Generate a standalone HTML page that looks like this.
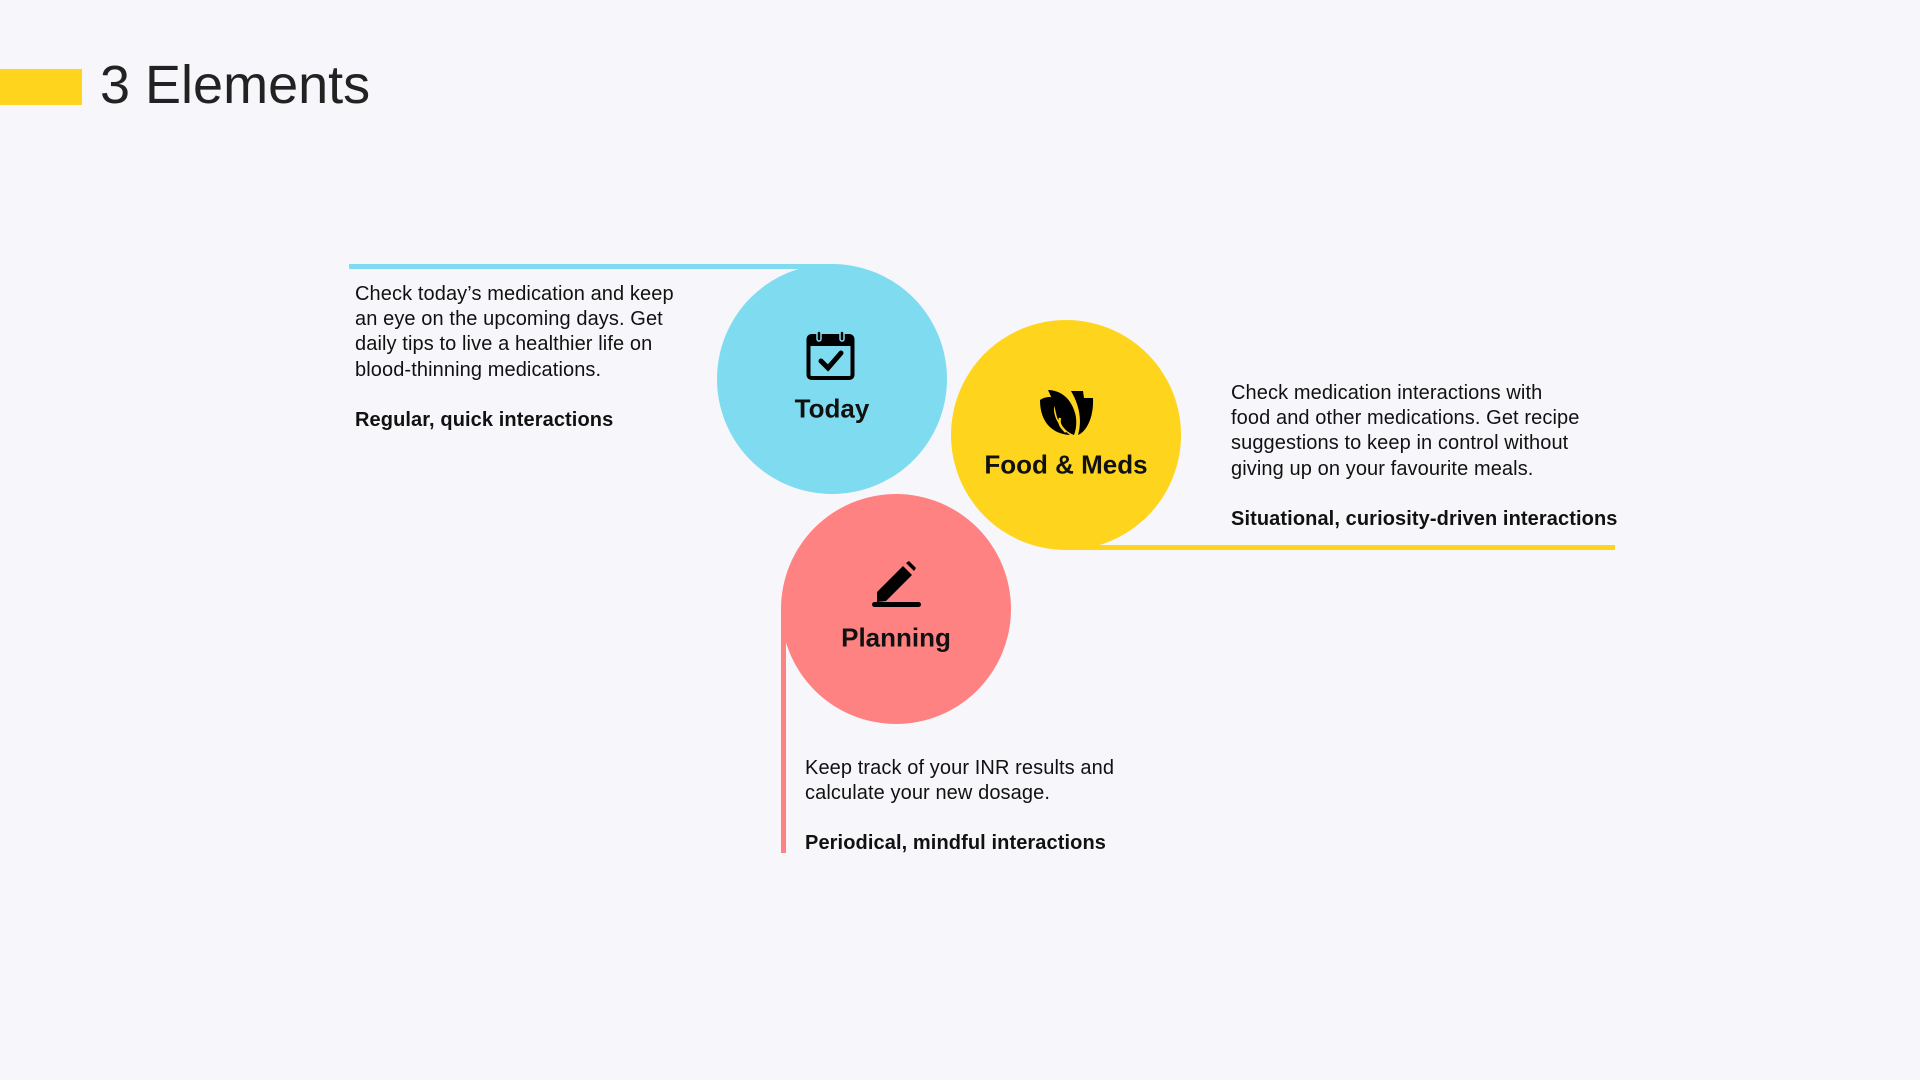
<!DOCTYPE html>
<html><head><meta charset="utf-8"><style>
body{margin:0;width:1920px;height:1080px;background:#f7f6fa;position:relative;overflow:hidden;font-family:"Liberation Sans",sans-serif;color:#111}
.a{position:absolute}
.c{position:absolute;border-radius:50%;width:230px;height:230px}
.lbl{position:absolute;width:300px;text-align:center;font-size:26px;font-weight:bold;transform:translate(-50%,-50%)}
.t{position:absolute;font-size:20px;line-height:25.2px;letter-spacing:0.1px}
.t b{display:block;margin-top:25px}
</style></head><body>
<div class="a" style="left:0;top:69px;width:82px;height:36px;background:#fed51c"></div>
<div class="a" style="left:100px;top:54px;font-size:54px;font-weight:300;color:#222">3 Elements</div>

<div class="a" style="left:349px;top:264px;width:483px;height:5px;background:#7fdcf0"></div>
<div class="a" style="left:1066px;top:545px;width:549px;height:5px;background:#fed51c"></div>
<div class="a" style="left:781px;top:609px;width:5px;height:244px;background:#ff8282"></div>

<div class="c" style="left:717px;top:264px;background:#7fdcf0"></div>
<div class="c" style="left:951px;top:320px;background:#fed51c"></div>
<div class="c" style="left:781px;top:494px;background:#ff8282"></div>

<svg class="a" style="left:806px;top:330px" width="52" height="52" viewBox="0 0 52 52">
<rect x="2.5" y="6" width="44" height="42" rx="3" fill="none" stroke="#000" stroke-width="4"/>
<rect x="2.5" y="6" width="44" height="10" fill="#000"/>
<rect x="11" y="1" width="4" height="10" rx="2" fill="#000" stroke="#7fdcf0" stroke-width="1.5"/>
<rect x="34" y="1" width="4" height="10" rx="2" fill="#000" stroke="#7fdcf0" stroke-width="1.5"/>
<path d="M15 31 L22 38 L35 23" fill="none" stroke="#000" stroke-width="5" stroke-linecap="round"/>
</svg>
<div class="lbl" style="left:832px;top:409px">Today</div>

<svg class="a" style="left:1038px;top:388px" width="58" height="50" viewBox="0 0 58 50">
<path d="M2 12 C2 35 15 46 32 47 C20 38 12 26 18 10 C12 8 6 9 2 12Z" fill="#000"/>
<path d="M10 2 C22 2 32 10 36 22 C40 32 38 42 36 47 C28 44 20 36 18 25 C16 16 13 8 10 2Z" fill="#000"/>
<path d="M33 3 L45 3 L46 10 L55 10 C56 30 48 44 40 47 C44 34 42 18 33 3Z" fill="#000"/>
<path d="M22 30 C20 36 24 40 28 44" fill="none" stroke="#fed51c" stroke-width="2.5"/>
</svg>
<div class="lbl" style="left:1066px;top:465px">Food &amp; Meds</div>

<svg class="a" style="left:870px;top:560px" width="52" height="52" viewBox="0 0 52 52">
<path d="M7 42 L7 32 L33 6 L42 15 L16 41 Z" fill="#000"/>
<path d="M36 3 L39 1 L46 8 L44 11 Z" fill="#000"/>
<rect x="2" y="42" width="49" height="5" rx="2.5" fill="#000"/>
</svg>
<div class="lbl" style="left:896px;top:638px">Planning</div>

<div class="t" style="left:355px;top:282px">Check today’s medication and keep<br>an eye on the upcoming days. Get<br>daily tips to live a healthier life on<br>blood-thinning medications.<b>Regular, quick interactions</b></div>
<div class="t" style="left:1231px;top:381px">Check medication interactions with<br>food and other medications. Get recipe<br>suggestions to keep in control without<br>giving up on your favourite meals.<b>Situational, curiosity-driven interactions</b></div>
<div class="t" style="left:805px;top:756px">Keep track of your INR results and<br>calculate your new dosage.<b>Periodical, mindful interactions</b></div>
</body></html>
